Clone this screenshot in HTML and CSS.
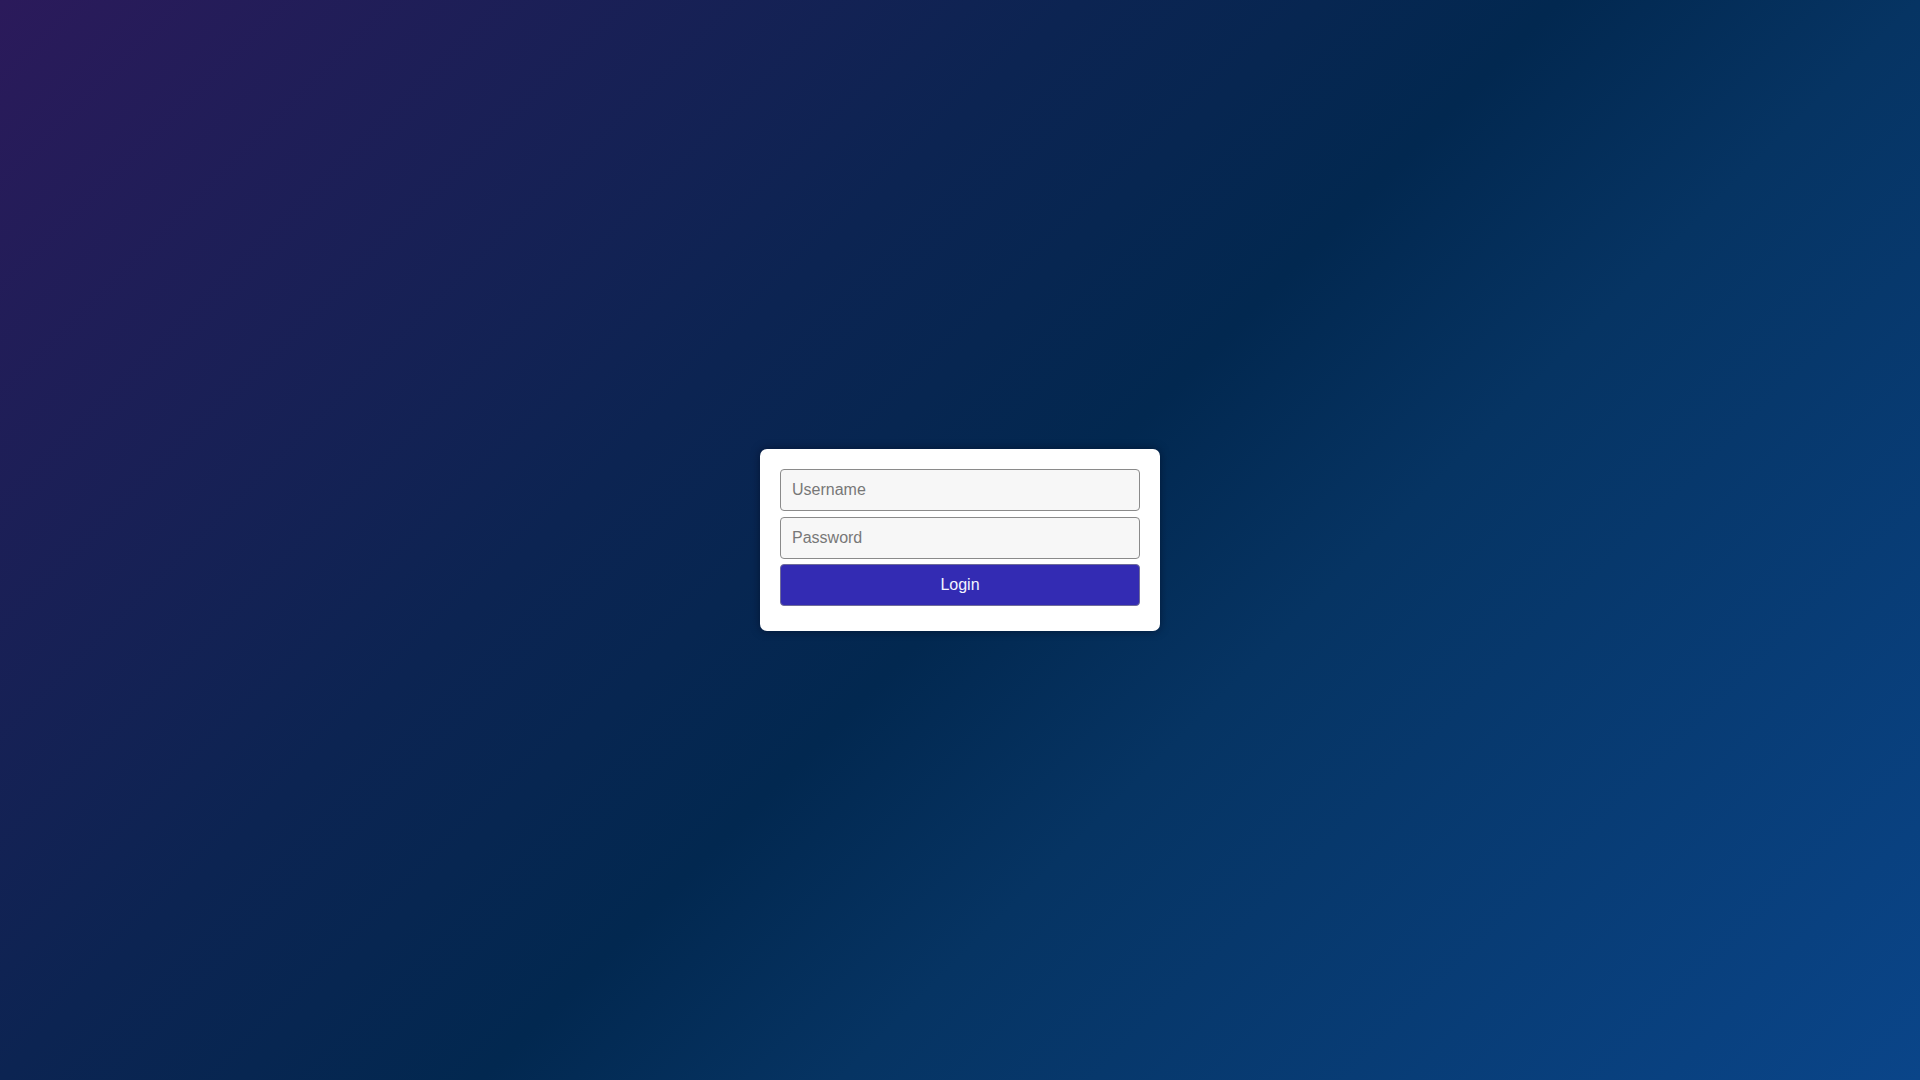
FILE: index.html
```html
<!DOCTYPE html>
<html lang="en">
<head>
<meta charset="utf-8">
<title>Login</title>
<link rel="stylesheet" href="styles.css">
</head>
<body>
<main class="page">
  <form class="card">
    <input class="field" type="text" placeholder="Username">
    <input class="field" type="password" placeholder="Password">
    <button class="btn" type="button">Login</button>
  </form>
</main>
</body>
</html>
```
FILE: styles.css
```css
html, body {
  margin: 0;
  padding: 0;
  height: 100%;
}
body {
  font-family: "Liberation Sans", Arial, sans-serif;
  background: linear-gradient(135deg, #2b1a5b 0%, #0c2452 36%, #022850 52%, #063463 64%, #0a4589 100%);
}
.page {
  height: 100%;
  display: flex;
  align-items: center;
  justify-content: center;
}
.card {
  width: 400px;
  box-sizing: border-box;
  padding: 20px 20px 19px;
  background: #ffffff;
  border-radius: 7px;
  box-shadow: 0 0 8px rgba(0, 10, 30, 0.55);
  display: flex;
  flex-direction: column;
  gap: 5.5px;
}
.field {
  height: 42px;
  box-sizing: border-box;
  margin: 0;
  padding: 0 11px;
  border: 1px solid #8a8a8a;
  border-radius: 4px;
  background: #f7f7f7;
  font-family: "Liberation Sans", Arial, sans-serif;
  font-size: 16px;
  color: #333;
  outline: none;
}
.field::placeholder {
  color: #777777;
}
.btn {
  height: 42px;
  box-sizing: border-box;
  margin: 0 0 6px;
  border: 1px solid #6f6c9a;
  border-radius: 4px;
  background: #332bb3;
  color: #f4f4ff;
  font-family: "Liberation Sans", Arial, sans-serif;
  font-size: 16px;
  cursor: pointer;
}
```
